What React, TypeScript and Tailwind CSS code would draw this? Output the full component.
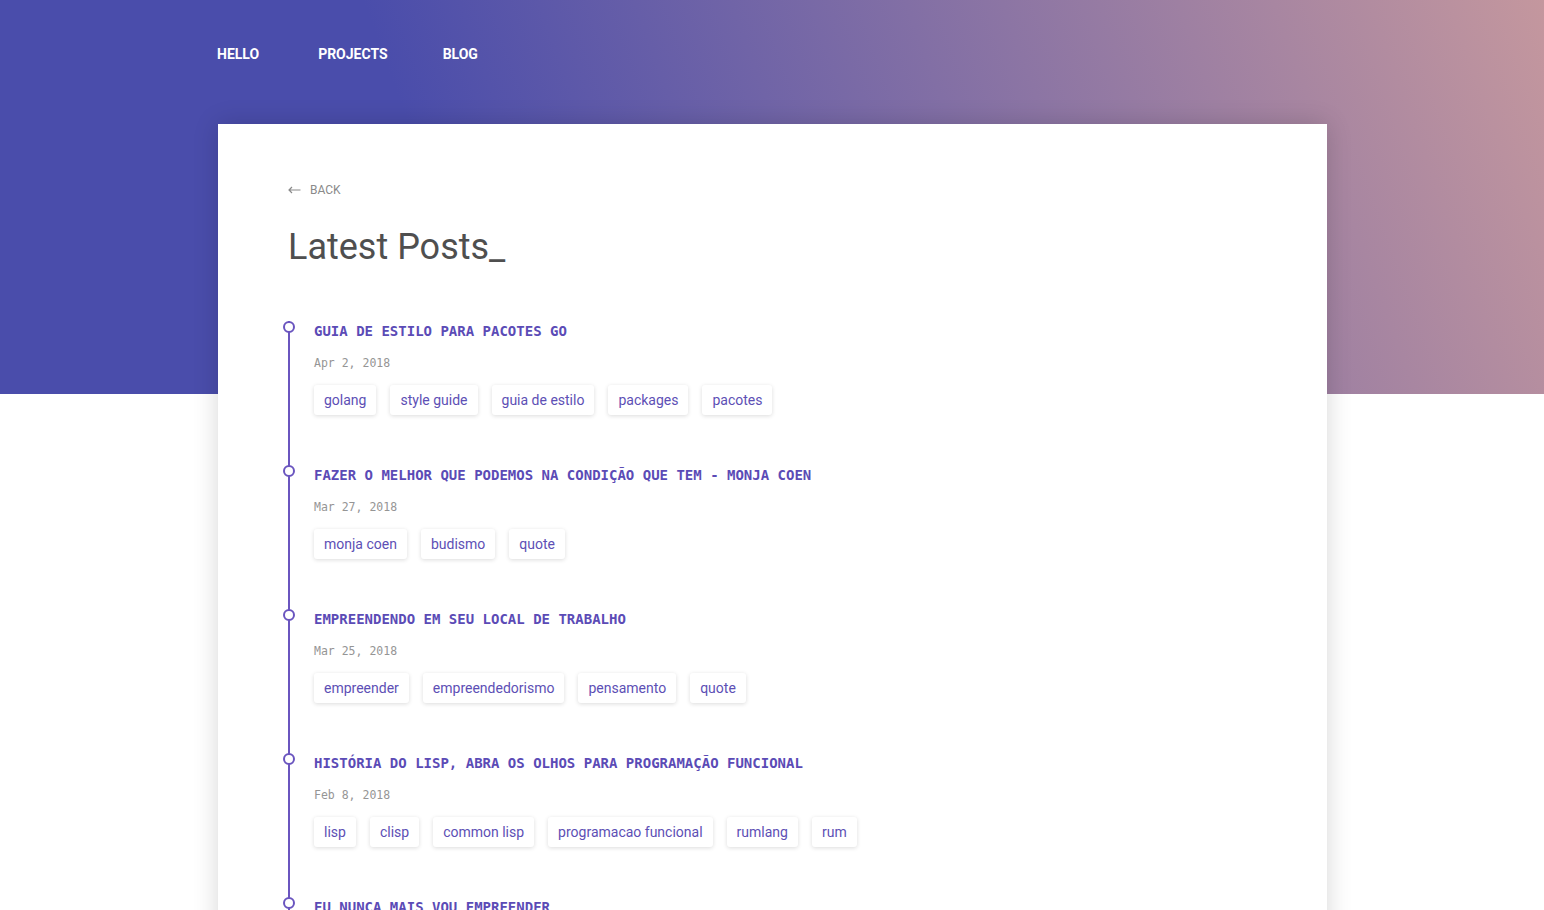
import React from "react";

interface Post {
  title: string;
  date: string;
  tags: string[];
}

const posts: Post[] = [
  {
    title: "GUIA DE ESTILO PARA PACOTES GO",
    date: "Apr 2, 2018",
    tags: ["golang", "style guide", "guia de estilo", "packages", "pacotes"],
  },
  {
    title: "FAZER O MELHOR QUE PODEMOS NA CONDIÇÃO QUE TEM - MONJA COEN",
    date: "Mar 27, 2018",
    tags: ["monja coen", "budismo", "quote"],
  },
  {
    title: "EMPREENDENDO EM SEU LOCAL DE TRABALHO",
    date: "Mar 25, 2018",
    tags: ["empreender", "empreendedorismo", "pensamento", "quote"],
  },
  {
    title: "HISTÓRIA DO LISP, ABRA OS OLHOS PARA PROGRAMAÇÃO FUNCIONAL",
    date: "Feb 8, 2018",
    tags: ["lisp", "clisp", "common lisp", "programacao funcional", "rumlang", "rum"],
  },
  {
    title: "EU NUNCA MAIS VOU EMPREENDER",
    date: "Jan 30, 2018",
    tags: ["empreender", "pensamento"],
  },
];

function BackArrow() {
  return (
    <svg width="13" height="8" viewBox="0 0 13 8" fill="none">
      <path d="M12.5 4H1M4 1L1 4l3 3" stroke="#8a8a8a" strokeWidth="1.2" />
    </svg>
  );
}

function PostItem({ post }: { post: Post }) {
  return (
    <li className="relative pl-6 pb-[50px]">
      <span className="absolute left-[-7px] top-0 h-3 w-3 rounded-full border-2 border-[#6a55bf] bg-white" />
      <a className="block font-['DejaVu_Sans_Mono',monospace] text-[14px] font-bold leading-5 text-[#5b4bb6]">
        {post.title}
      </a>
      <div className="mt-[14px] font-['DejaVu_Sans_Mono',monospace] text-[11.5px] leading-4 text-[#959595]">
        {post.date}
      </div>
      <div className="mt-[14px] flex flex-wrap gap-[14px]">
        {post.tags.map((tag) => (
          <span
            key={tag}
            className="flex h-[30px] items-center rounded-[3px] bg-white px-[10px] text-[14px] text-[#5d4fb5] shadow-[0_1px_4px_rgba(0,0,0,0.14)]"
          >
            {tag}
          </span>
        ))}
      </div>
    </li>
  );
}

export default function App() {
  return (
    <div className="min-h-[910px] bg-white bg-[linear-gradient(70deg,#4a4dab_30%,#c4979e_100%)] bg-[length:100%_394px] bg-no-repeat font-['Roboto',sans-serif]">
      <div className="mx-auto w-[1110px]">
        <nav className="flex h-[108px] items-center text-[14px] font-bold text-white">
          <a>HELLO</a>
          <a className="ml-[59px]">PROJECTS</a>
          <a className="ml-[55px]">BLOG</a>
        </nav>
        <main className="ml-px mt-4 min-h-[900px] bg-white px-[70px] pt-[58px] shadow-[0_0_24px_rgba(0,0,0,0.16)]">
          <a className="flex h-4 items-center gap-[9px] text-[12px] text-[#8a8a8a]">
            <BackArrow />
            BACK
          </a>
          <h1 className="mt-[28px] text-[36px] leading-[1.2] text-[#4f4f4f]">Latest Posts_</h1>
          <ul className="mt-[52px] border-l-2 border-[#6a55bf]">
            {posts.map((p) => (
              <PostItem key={p.title} post={p} />
            ))}
          </ul>
        </main>
      </div>
    </div>
  );
}
